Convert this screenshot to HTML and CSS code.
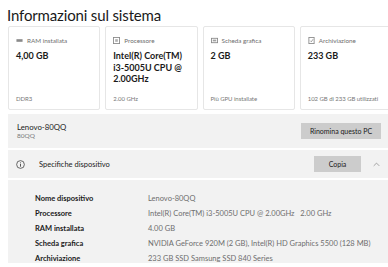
FILE: index.html
```html
<!DOCTYPE html>
<html>
<head>
  <link rel="stylesheet" href="styles.css">
</head>
<body>
  <div class="page">
    <h1 class="title">Informazioni sul sistema</h1>

    <div class="cards">
      <div class="card">
        <div class="card-head">
          <svg class="icon" viewBox="0 0 8 8"><rect x="0.5" y="2.5" width="7" height="3" fill="#8a8a8a"/></svg>
          <span>RAM installata</span>
        </div>
        <div class="card-value">4,00 GB</div>
        <div class="card-foot">DDR3</div>
      </div>
      <div class="card">
        <div class="card-head">
          <svg class="icon" viewBox="0 0 8 8"><rect x="0.5" y="0.5" width="7" height="7" fill="none" stroke="#8a8a8a"/><rect x="2.5" y="2.5" width="3" height="3" fill="#b0b0b0"/></svg>
          <span>Processore</span>
        </div>
        <div class="card-value">Intel(R) Core(TM) i3-5005U CPU @ 2.00GHz</div>
        <div class="card-foot">2.00 GHz</div>
      </div>
      <div class="card">
        <div class="card-head">
          <svg class="icon" viewBox="0 0 8 8"><rect x="0.5" y="1.5" width="7" height="5" fill="none" stroke="#8a8a8a"/><rect x="2" y="3" width="4" height="2" fill="#a0a0a0"/></svg>
          <span>Scheda grafica</span>
        </div>
        <div class="card-value">2 GB</div>
        <div class="card-foot">Più GPU installate</div>
      </div>
      <div class="card">
        <div class="card-head">
          <svg class="icon" viewBox="0 0 8 8"><rect x="1" y="0.5" width="6" height="7" fill="none" stroke="#8a8a8a"/><path d="M2.5 4.2 L3.8 5.5 L5.8 2.5" fill="none" stroke="#8a8a8a" stroke-width="0.9"/></svg>
          <span>Archiviazione</span>
        </div>
        <div class="card-value">233 GB</div>
        <div class="card-foot">102 GB di 233 GB utilizzati</div>
      </div>
    </div>

    <div class="band name-band">
      <div>
        <div class="pc-name">Lenovo-80QQ</div>
        <div class="pc-model">80QQ</div>
      </div>
      <button class="btn btn-rename">Rinomina questo PC</button>
    </div>

    <div class="band specs-head">
      <svg class="info" viewBox="0 0 10 10"><circle cx="5" cy="5" r="4.3" fill="none" stroke="#333" stroke-width="0.8"/><rect x="4.55" y="4.2" width="0.9" height="3.2" fill="#333"/><circle cx="5" cy="3" r="0.55" fill="#333"/></svg>
      <span class="specs-title">Specifiche dispositivo</span>
      <button class="btn btn-copy">Copia</button>
      <svg class="chevron" viewBox="0 0 10 6"><path d="M1 5 L5 1 L9 5" fill="none" stroke="#777" stroke-width="0.9"/></svg>
    </div>

    <div class="band specs">
      <div class="spec-row"><span class="spec-label">Nome dispositivo</span><span>Lenovo-80QQ</span></div>
      <div class="spec-row"><span class="spec-label">Processore</span><span>Intel(R) Core(TM) i3-5005U CPU @ 2.00GHz &nbsp; 2.00 GHz</span></div>
      <div class="spec-row"><span class="spec-label">RAM installata</span><span>4.00 GB</span></div>
      <div class="spec-row"><span class="spec-label">Scheda grafica</span><span>NVIDIA GeForce 920M (2 GB), Intel(R) HD Graphics 5500 (128 MB)</span></div>
      <div class="spec-row"><span class="spec-label">Archiviazione</span><span>233 GB SSD Samsung SSD 840 Series</span></div>
    </div>
  </div>
</body>
</html>
```

FILE: styles.css
```css
html, body {
  margin: 0;
  overflow: hidden;
}
body {
  font-family: Lato, "Open Sans", sans-serif;
  background: #ffffff;
  color: #1b1b1b;
}
.page {
  width: 384px;
  padding-left: 8px;
}
.title {
  margin: 0 0 0 -1px;
  padding-top: 4px;
  font-size: 15px;
  font-weight: 400;
  line-height: 22px;
  letter-spacing: -0.15px;
  color: #1a1a1a;
  height: 26px;
  box-sizing: border-box;
}
.cards {
  display: grid;
  grid-template-columns: repeat(4, 1fr);
  gap: 5px;
  height: 84px;
}
.card {
  border: 1px solid #e6e6e6;
  border-radius: 2px;
  padding: 8px 6px 6px 7px;
  display: flex;
  flex-direction: column;
  background: #fff;
  min-width: 0;
}
.card-head {
  display: flex;
  align-items: center;
  gap: 4px;
  font-size: 6.3px;
  color: #6e6e6e;
  height: 10px;
  white-space: nowrap;
}
.icon {
  width: 7px;
  height: 7px;
  flex: none;
}
.card-value {
  margin-top: 5px;
  font-size: 9px;
  font-weight: 700;
  line-height: 11.5px;
  color: #1a1a1a;
  flex: 1;
}
.card-foot {
  font-size: 6px;
  color: #777;
  line-height: 9px;
  white-space: nowrap;
  letter-spacing: -0.05px;
}
.band {
  background: #f2f2f2;
  margin-top: 2px;
}
.name-band {
  margin-top: 4px;
  height: 34px;
  display: flex;
  align-items: center;
  justify-content: space-between;
  padding: 0 11px 0 9px;
}
.pc-name {
  font-size: 7.8px;
  line-height: 10px;
  color: #1a1a1a;
}
.pc-model {
  font-size: 6.5px;
  line-height: 8px;
  color: #7a7a7a;
}
.btn {
  font-family: inherit;
  border: none;
  background: #cccccc;
  color: #1a1a1a;
  font-size: 7px;
  padding: 0;
  height: 16px;
}
.btn-rename {
  width: 80px;
}
.specs-head {
  height: 28px;
  display: flex;
  align-items: center;
  padding: 0 11px 0 5px;
}
.info {
  width: 9px;
  height: 9px;
  margin-left: 3px;
}
.specs-title {
  font-size: 7.5px;
  margin-left: 14px;
  flex: 1;
}
.btn-copy {
  width: 47px;
}
.chevron {
  width: 7px;
  height: 5px;
  margin-left: 12px;
  margin-right: 1px;
}
.specs {
  height: 72px;
  padding-top: 11px;
}
.spec-row {
  display: grid;
  grid-template-columns: 113px 1fr;
  padding-left: 27px;
  font-size: 7.5px;
  line-height: 15px;
  color: #6e6e6e;
  white-space: nowrap;
}
.spec-label {
  font-weight: 700;
  color: #1a1a1a;
}
```
